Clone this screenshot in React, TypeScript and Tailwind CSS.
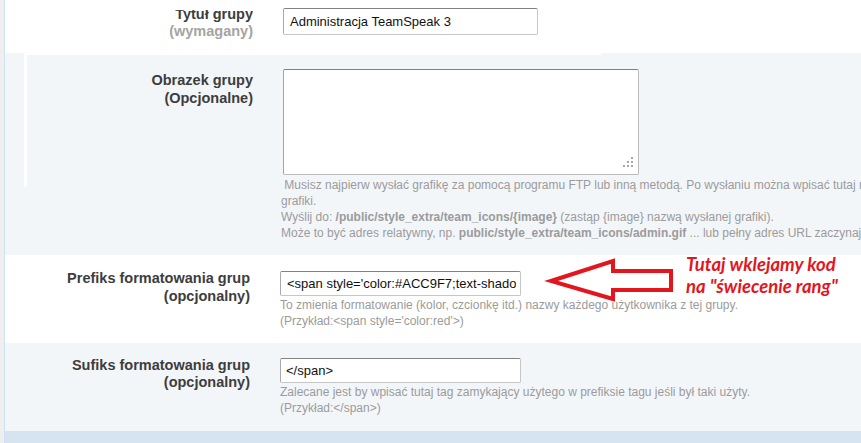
import React from "react";

const help = "text-[12px] leading-[16px] text-[#9b9b9b] whitespace-nowrap";
const field =
  "flex items-center bg-white rounded-[2px] border border-[#c6c6c6] border-t-[#828282] border-l-[#a9a9a9] text-[13px] text-[#111] whitespace-nowrap overflow-hidden";

function ResizeGrip() {
  // little dotted triangle in the corner of the textarea
  const dots = [
    [9, 0],
    [5, 4],
    [9, 4],
    [1, 8],
    [5, 8],
    [9, 8],
  ];
  return (
    <svg width="12" height="11" className="absolute right-[4px] bottom-[6px]">
      {dots.map(([x, y]) => (
        <rect key={`${x}-${y}`} x={x} y={y} width="2" height="2" fill="#a7a7a7" />
      ))}
    </svg>
  );
}

export default function App() {
  return (
    <div className="relative flex h-[443px] w-[861px] overflow-hidden bg-white font-['Liberation_Sans',Arial,sans-serif]">
      {/* left gutter */}
      <div className="w-[4px] shrink-0 bg-[#efefef]" />

      <div className="flex min-w-0 flex-1 flex-col border-l border-[#cfe1f3]">
        {/* Tytuł grupy */}
        <div className="flex h-[53px] shrink-0 items-start bg-white">
          <div className="w-[248px] shrink-0 pt-[10px] text-right text-[14.5px] font-bold">
            <div className="h-[13px] overflow-hidden">
              <div className="-mt-[4px] leading-[16px] text-[#3d3d3d]">Tytuł grupy</div>
            </div>
            <div className="leading-[16px] text-[#a4a4a4]">(wymagany)</div>
          </div>
          <div className="pl-[30px] pt-[8px]">
            <div className={`${field} h-[27px] w-[255px] pl-[6px]`}>Administracja TeamSpeak 3</div>
          </div>
        </div>

        {/* Obrazek grupy */}
        <div className="relative flex h-[202px] shrink-0 items-start bg-[#f3f6f9]">
          <div className="absolute left-[19px] top-0 h-[134px] w-[3px] bg-white" />
          <div className="absolute left-[19px] top-0 h-[2px] w-[577px] bg-white" />
          <div className="w-[248px] shrink-0 pt-[18px] text-right text-[14.5px] font-bold leading-[18px] text-[#3d3d3d]">
            <div>Obrazek grupy</div>
            <div>(Opcjonalne)</div>
          </div>
          <div className="pl-[30px] pt-[16px]">
            <div className="relative h-[106px] w-[356px] rounded-[2px] border border-[#bcbcbc] border-t-[#808080] border-l-[#a3a3a3] bg-white">
              <ResizeGrip />
            </div>
            <div className={`-ml-[2px] mt-[2px] ${help}`}>
              <div>
                &nbsp;Musisz najpierw wysłać grafikę za pomocą programu FTP lub inną metodą. Po wysłaniu można wpisać tutaj nazwę
              </div>
              <div>grafiki.</div>
              <div>
                Wyślij do: <b>/public/style_extra/team_icons/{"{image}"}</b> (zastąp {"{image}"} nazwą wysłanej grafiki).
              </div>
              <div>
                Może to być adres relatywny, np. <b>public/style_extra/team_icons/admin.gif</b> ... lub pełny adres URL zaczynający się od http://
              </div>
            </div>
          </div>
        </div>

        {/* Prefiks */}
        <div className="flex h-[88px] shrink-0 items-start bg-white">
          <div className="w-[245px] shrink-0 pt-[14px] text-right text-[14.5px] font-bold leading-[18px] text-[#3d3d3d]">
            <div>Prefiks formatowania grup</div>
            <div>(opcjonalny)</div>
          </div>
          <div className="pl-[30px] pt-[16px]">
            <div className={`${field} h-[25px] w-[241px] pl-[6px] pr-[4px]`}>
              <span className="block overflow-hidden">
                &lt;span style='color:#ACC9F7;text-shadow:0 0 6px #ACC9F7'&gt;
              </span>
            </div>
            <div className={`mt-[1px] ${help}`}>
              <div>To zmienia formatowanie (kolor, czcionkę itd.) nazwy każdego użytkownika z tej grupy.</div>
              <div>(Przykład:&lt;span style='color:red'&gt;)</div>
            </div>
          </div>
        </div>

        {/* Sufiks */}
        <div className="flex h-[88px] shrink-0 items-start bg-[#f3f6f9]">
          <div className="w-[245px] shrink-0 pt-[14px] text-right text-[14.5px] font-bold leading-[17px] text-[#3d3d3d]">
            <div>Sufiks formatowania grup</div>
            <div>(opcjonalny)</div>
          </div>
          <div className="pl-[30px] pt-[15px]">
            <div className={`${field} h-[25px] w-[241px] pl-[5px]`}>&lt;/span&gt;</div>
            <div className={`mt-[1px] ${help}`}>
              <div>Zalecane jest by wpisać tutaj tag zamykający użytego w prefiksie tagu jeśli był taki użyty.</div>
              <div>(Przykład:&lt;/span&gt;)</div>
            </div>
          </div>
        </div>

        <div className="flex-1 bg-[#d6e3f0]" />
      </div>

      {/* annotation arrow */}
      <svg width="140" height="60" className="absolute left-[540px] top-[250px]">
        <polygon
          points="11,31 73,11 73,21 131,21 131,40 73,40 73,49"
          fill="white"
          stroke="#e3161d"
          strokeWidth="4"
          strokeLinejoin="miter"
        />
      </svg>
      <div className="absolute left-[686px] top-[253px] font-['Lato',sans-serif] text-[18.5px] font-bold italic leading-[22px] text-[#e3161d]">
        <div>Tutaj wklejamy kod</div>
        <div>na "świecenie rang"</div>
      </div>
    </div>
  );
}
